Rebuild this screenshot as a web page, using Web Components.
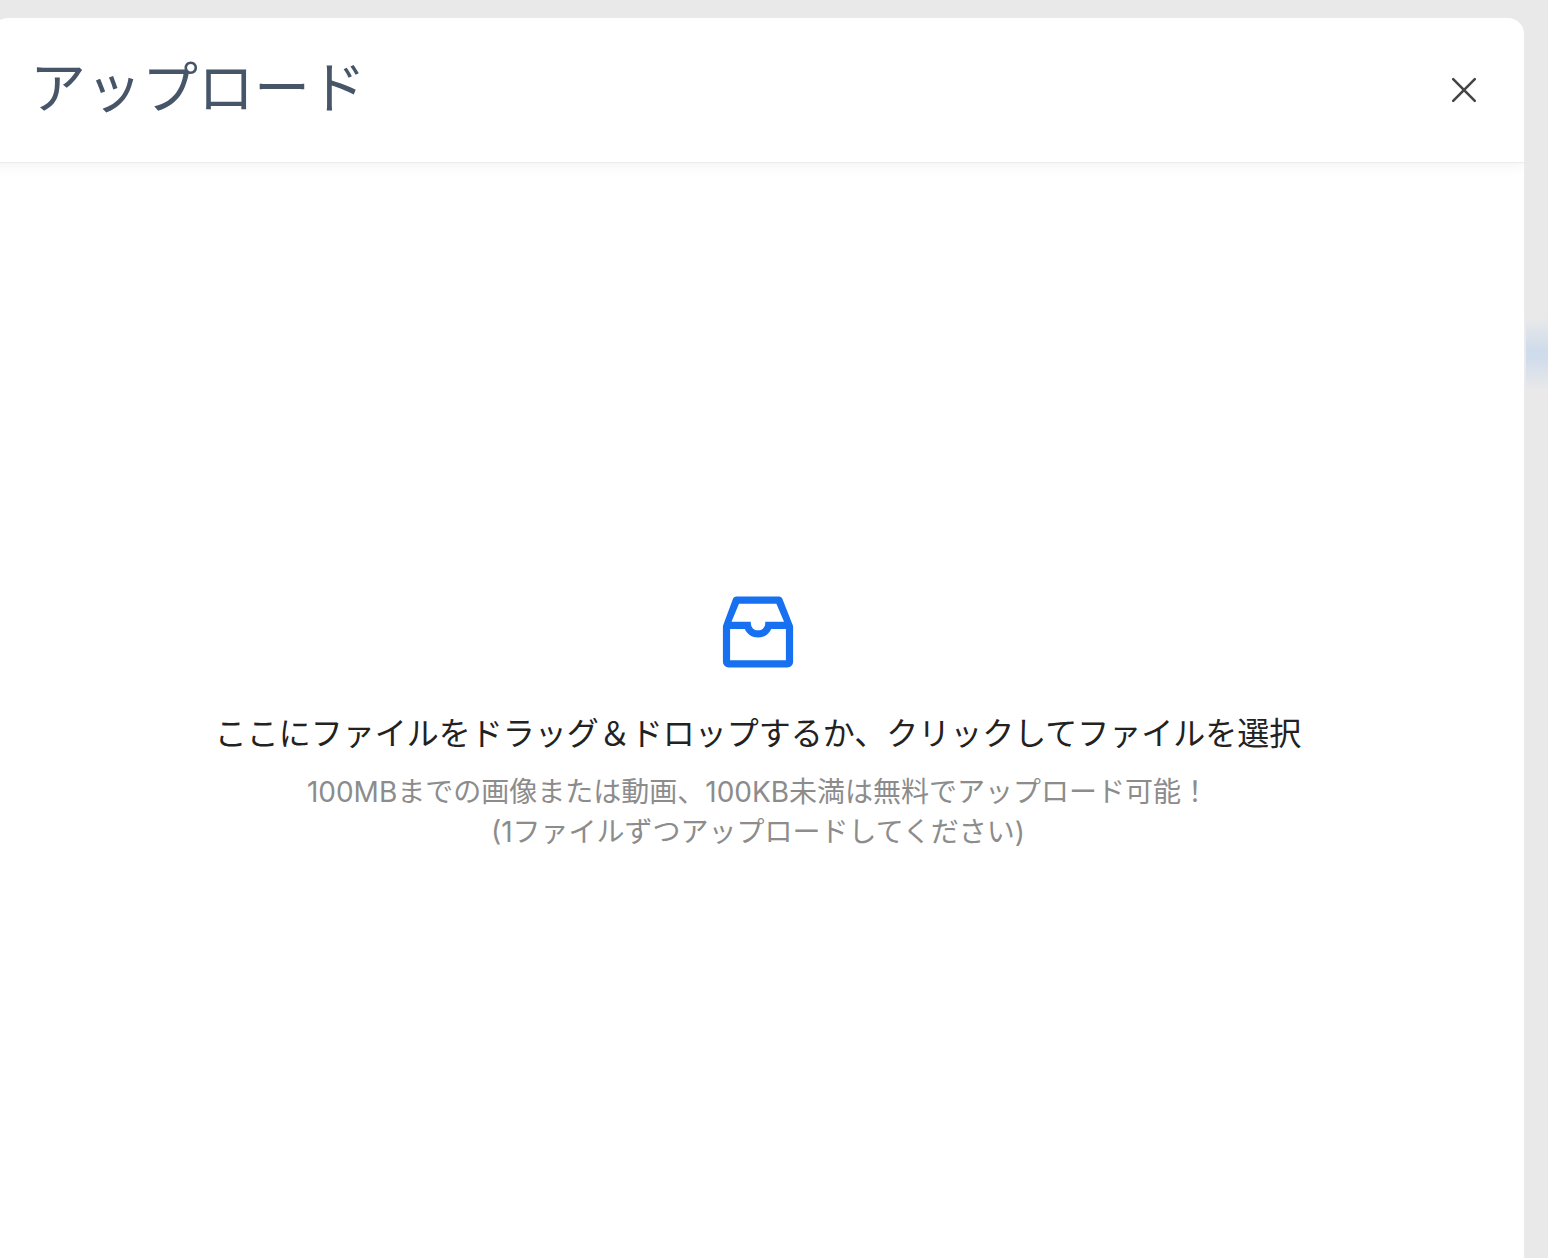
<!DOCTYPE html>
<html lang="ja">
<head>
<meta charset="utf-8">
<meta name="viewport" content="width=device-width, initial-scale=1">
<title>アップロード</title>
<style>
html, body { margin: 0; height: 100%; overflow: hidden; }
body { font-family: Inter, "Noto Sans CJK JP", sans-serif; }
</style>
</head>
<body>
<upload-page>
  <upload-panel>
    <panel-header slot="header">アップロード</panel-header>
    <drop-zone>
      <inbox-icon slot="icon"></inbox-icon>
      ここにファイルをドラッグ＆ドロップするか、クリックしてファイルを選択
      <span slot="hint">100MBまでの画像または動画、100KB未満は無料でアップロード可能！<br>(1ファイルずつアップロードしてください)</span>
    </drop-zone>
  </upload-panel>
</upload-page>
<script>
function define(name, markup) {
  const template = document.createElement('template');
  template.innerHTML = markup;
  customElements.define(name, class extends HTMLElement {
    constructor() {
      super();
      this.attachShadow({ mode: 'open' }).append(template.content.cloneNode(true));
    }
  });
}

/* Dimmed page behind the panel, with a soft highlighted row at the right edge. */
define('upload-page', `
<style>
:host {
  display: flex; box-sizing: border-box; min-height: 100vh; padding: 18px 24px 0 0;
  background:
    linear-gradient(#e9e9e9 0, #cfdceb 32px, #d0dceb 40px, #e9e9e9 72px) right 318px / 22px 72px no-repeat,
    #e9e9e9;
}
</style>
<slot></slot>`);

define('upload-panel', `
<style>
:host {
  display: flex; flex-direction: column; flex: 1; margin-left: -8px; overflow: hidden;
  background: #fff; border-radius: 16px 16px 0 0; box-shadow: 0 0 2px #ececf2;
}
</style>
<slot name="header"></slot>
<slot></slot>`);

define('panel-header', `
<style>
:host {
  display: flex; align-items: center; justify-content: space-between;
  box-sizing: border-box; height: 144px; padding: 0 44px 0 38px;
  box-shadow: 0 1px 1px #ededed, 0 4px 12px rgba(0, 0, 0, .05);
}
h1 { margin: 0; padding-bottom: 4px; font-size: 56px; line-height: 80px; font-weight: 400; color: #475569; }
button {
  display: flex; padding: 4px; border: 0; background: none; color: #464648; cursor: pointer;
}
svg { display: block; width: 24px; height: 24px; overflow: visible; }
</style>
<h1><slot></slot></h1>
<button type="button" aria-label="閉じる">
  <svg viewBox="0 0 24 24" fill="none" stroke="currentColor" stroke-width="2.6" stroke-linecap="round"><path d="M1.2 1.2l21.6 21.6M22.8 1.2L1.2 22.8"/></svg>
</button>`);

define('drop-zone', `
<style>
:host { display: flex; flex: 1; }
label {
  display: flex; flex: 1; flex-direction: column; align-items: center; justify-content: center;
  padding-top: 16px; text-align: center; cursor: pointer;
}
.title { margin-top: 30px; font-size: 32px; line-height: 48px; color: #222; }
.hint { margin-top: 14px; font-size: 28px; line-height: 40px; color: #8c8c8c; }
input { position: absolute; width: 1px; height: 1px; opacity: 0; }
</style>
<label for="file">
  <slot name="icon"></slot>
  <span class="title"><slot></slot></span>
  <span class="hint"><slot name="hint"></slot></span>
</label>
<input id="file" type="file" accept="image/*,video/*">`);

define('inbox-icon', `
<style>
:host { display: block; color: #1670f0; }
svg { display: block; width: 96px; height: 96px; }
</style>
<svg viewBox="0 0 1024 1024" fill="currentColor" aria-hidden="true"><path d="M885.2 446.3l-.2-.8-112.2-285.1c-5-16.1-19.9-27.2-36.8-27.2H281.2c-17 0-32.1 11.3-36.9 27.6L139.4 443l-.3.7-.2.8c-1.3 4.9-1.7 9.9-1 14.8-.1 1.6-.2 3.2-.2 4.8V830a60.9 60.9 0 0060.8 60.8h627.2c33.5 0 60.8-27.3 60.9-60.8V464.1c0-1.3 0-2.6-.1-3.7.4-4.9 0-9.6-1.3-14.1zm-295.8-43l-.3 15.7c-.8 44.9-31.8 75.1-77.1 75.1-22.1 0-41.1-7.1-54.8-20.6S436 441.2 435.6 419l-.3-15.7H229.5L309 210h399.2l81.7 193.3H589.4zm-375 76.8h157.3c24.3 57.1 76 90.8 140.4 90.8 33.7 0 65-9.4 90.3-27.2 22.2-15.6 39.5-37.4 50.7-63.6h156.5V814H214.4V480.1z"/></svg>`);
</script>
</body>
</html>
